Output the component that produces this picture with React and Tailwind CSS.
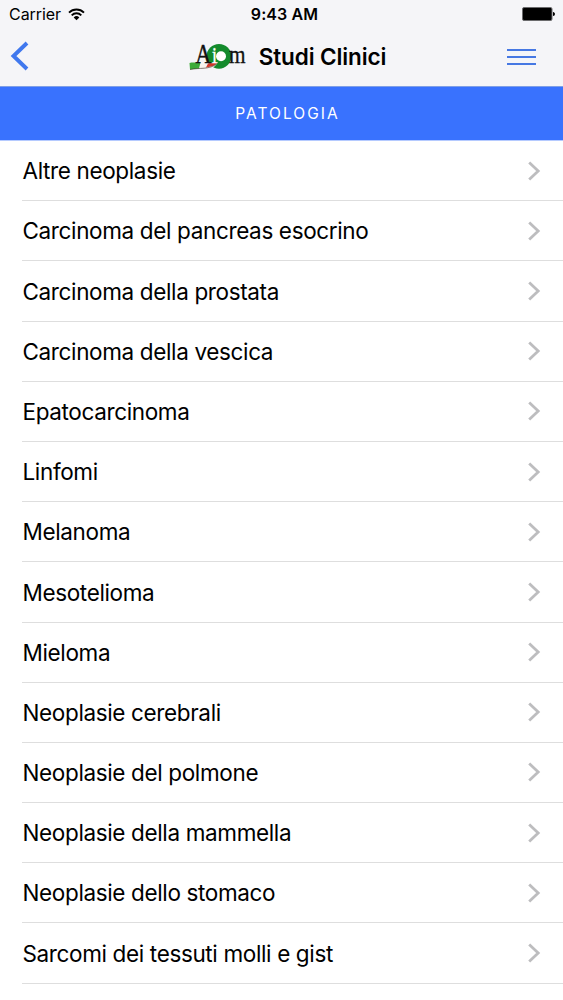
import React from 'react';

const pathologies = [
  'Altre neoplasie',
  'Carcinoma del pancreas esocrino',
  'Carcinoma della prostata',
  'Carcinoma della vescica',
  'Epatocarcinoma',
  'Linfomi',
  'Melanoma',
  'Mesotelioma',
  'Mieloma',
  'Neoplasie cerebrali',
  'Neoplasie del polmone',
  'Neoplasie della mammella',
  'Neoplasie dello stomaco',
  'Sarcomi dei tessuti molli e gist',
];

function WifiIcon() {
  return (
    <svg width="17" height="13" viewBox="0 0 17 13" fill="none" stroke="#000" strokeWidth="1.9">
      <path d="M1 4.6a10.6 10.6 0 0 1 15 0" />
      <path d="M3.7 7.3a6.8 6.8 0 0 1 9.6 0" />
      <path d="M8.5 12.2 5.7 9.4a4 4 0 0 1 5.6 0Z" fill="#000" stroke="none" />
    </svg>
  );
}

function BatteryIcon() {
  return (
    <svg width="34" height="14" viewBox="0 0 34 14">
      <rect x="0.5" y="0.5" width="29.5" height="13" rx="1.5" fill="#000" stroke="#6b6b6d" />
      <path d="M31 5c2.6 0 2.6 4 0 4Z" fill="#000" />
    </svg>
  );
}

function AiomLogo() {
  return (
    <svg width="58" height="34" viewBox="0 -2 58 34" className="overflow-visible" aria-label="Aiom">
      <circle cx="30" cy="14.3" r="12.4" fill="#138a2c" />
      <circle cx="32" cy="14.3" r="5" fill="#fff" />
      {/* tricolor ribbon */}
      <path d="M1 21.5C8 19.5 15 24 21 21.5L29 20C25 28 18 26.5 11 27L1 27.5Z" fill="#f7f3ee" />
      <path d="M0.5 21C4 20 8 21 11.5 20.5L10 26.5 1 27.5Z" fill="#3dab38" />
      <path d="M19 21.5 28.5 20.5C26.5 22.5 24.5 24.5 17 25.5Z" fill="#d3382b" />
      <path d="M1 27.5C10 25.5 21 28 28 21.5" fill="none" stroke="#3b2a24" strokeWidth="0.6" />
      <g fontFamily="'Liberation Serif', serif">
        <text x="6.5" y="20.5" fill="#111" stroke="#111" strokeWidth="0.5" fontSize="28" textLength="15.5" lengthAdjust="spacingAndGlyphs">A</text>
        <text x="23" y="20.5" fill="#fff" stroke="#fff" strokeWidth="0.4" fontSize="23" textLength="5" lengthAdjust="spacingAndGlyphs">i</text>
        <text x="40" y="20.5" fill="#111" stroke="#111" strokeWidth="0.4" fontSize="26" textLength="16.5" lengthAdjust="spacingAndGlyphs">m</text>
      </g>
    </svg>
  );
}

function StatusBar() {
  return (
    <div className="grid h-[28px] grid-cols-3 items-center pl-[9px] pr-[7px] text-[16px] leading-none text-black">
      <div className="flex items-center gap-[7px]">
        <span className="tracking-[-0.05px]">Carrier</span>
        <WifiIcon />
      </div>
      <span className="pl-1 text-center font-semibold tracking-[0.1px]">9:43 AM</span>
      <div className="flex justify-end">
        <BatteryIcon />
      </div>
    </div>
  );
}

function NavBar() {
  return (
    <div className="flex h-[57px] items-center justify-between pl-[10px] pr-[27px]">
      <button aria-label="Indietro" className="pb-[2px]">
        <svg width="19" height="30" viewBox="0 0 19 30" fill="none" stroke="#4078ee" strokeWidth="3.9">
          <path d="M17 2 3.5 15 17 28" />
        </svg>
      </button>
      <div className="flex items-center gap-3 pl-[39px]">
        <AiomLogo />
        <h1 className="whitespace-nowrap pt-px text-[22.5px] font-semibold leading-none tracking-[-0.1px] text-black">Studi Clinici</h1>
      </div>
      <button aria-label="Menu" className="flex w-[29px] flex-col gap-[5px]">
        <span className="h-[2px] bg-[#4678e3]" />
        <span className="h-[2px] bg-[#4678e3]" />
        <span className="h-[2px] bg-[#4678e3]" />
      </button>
    </div>
  );
}

export default function App() {
  return (
    <div className="h-[1000px] overflow-hidden bg-white font-['Inter','Liberation_Sans',sans-serif]">
      <header className="h-[87px] border-b border-[#7f9fe6] bg-[#f5f5f8]">
        <StatusBar />
        <NavBar />
      </header>

      <div className="flex h-[53px] items-center justify-center bg-[#3972fe] pl-[12px] pt-px text-[15.5px] tracking-[2.05px] text-white">
        PATOLOGIA
      </div>

      <ul className="border-t border-[#b5caff]">
        {pathologies.map((name) => (
          <li key={name} className="pl-[22px]">
            <div className="flex h-[60.2px] items-center justify-between border-b border-[#dedede] pr-[22px]">
              <span className="whitespace-nowrap pl-[0.5px] pt-px text-[22.5px] tracking-[-0.36px] text-black">{name}</span>
              <svg width="14" height="20" viewBox="0 0 14 20" fill="none" stroke="#bdbdbf" strokeWidth="2.8">
                <path d="m2.2 1.5 9 8.5-9 8.5" />
              </svg>
            </div>
          </li>
        ))}
      </ul>
    </div>
  );
}
